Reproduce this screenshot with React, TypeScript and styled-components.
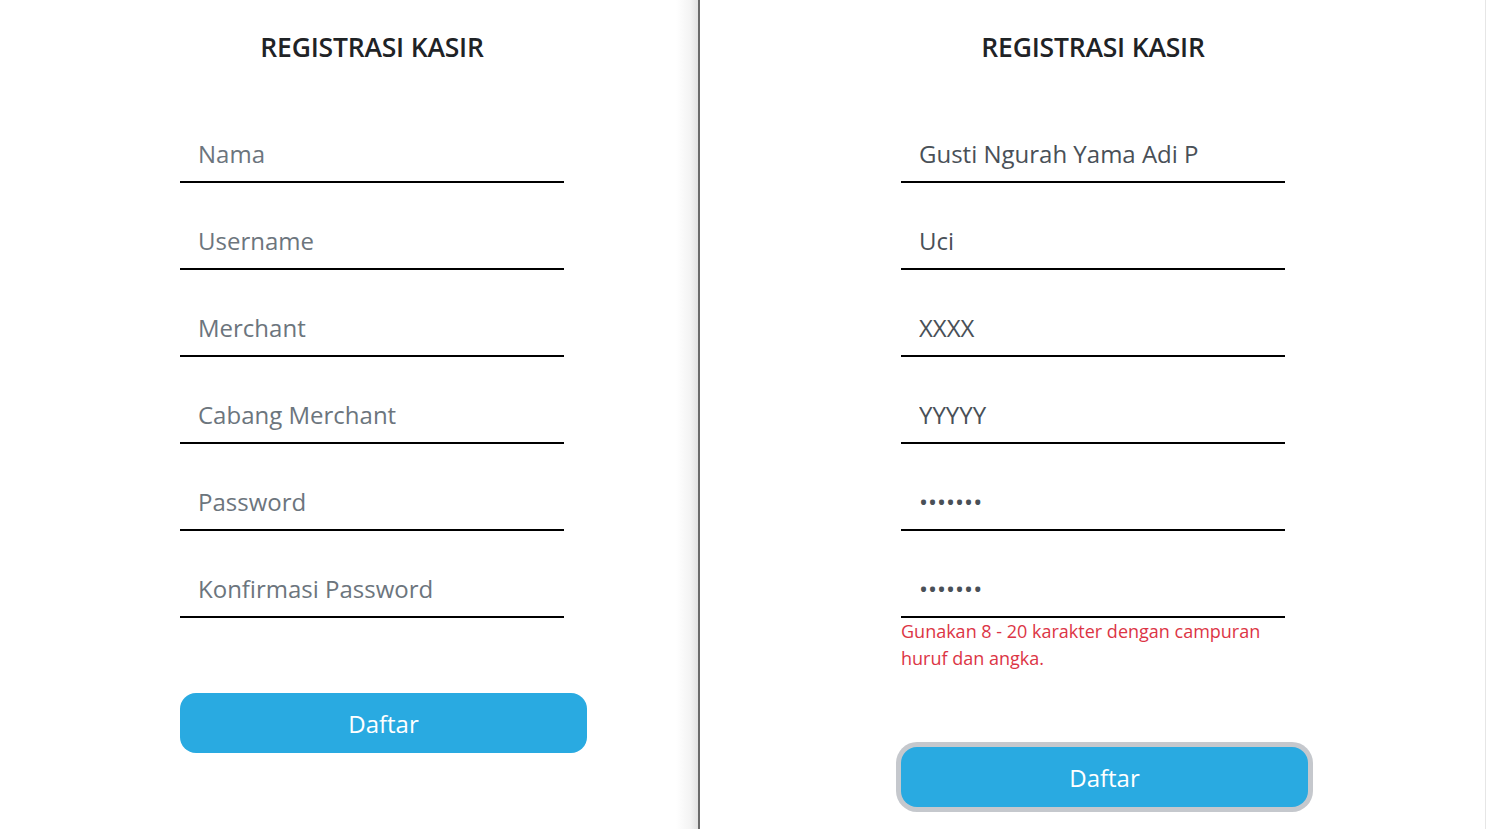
import React from "react";
import styled, { createGlobalStyle } from "styled-components";

const GlobalStyle = createGlobalStyle`
  html, body {
    margin: 0;
    padding: 0;
    background: #ffffff;
    font-family: "Open Sans", "Liberation Sans", sans-serif;
  }
  * {
    box-sizing: border-box;
  }
`;

const Page = styled.div`
  display: flex;
  width: 1486px;
  height: 829px;
  overflow: hidden;
`;

const Panel = styled.div<{ $offset: number; $side: "left" | "right" }>`
  flex: ${(p) => (p.$side === "left" ? "0 0 698px" : "1 1 auto")};
  height: 100%;
  padding-left: ${(p) => p.$offset}px;
  padding-top: 30px;
  background: ${(p) =>
    p.$side === "left"
      ? "linear-gradient(to left, #e2e2e2 0px, #f4f4f4 8px, #ffffff 22px)"
      : "#ffffff"};
  border-left: ${(p) => (p.$side === "right" ? "2px solid #6a6a6a" : "none")};
  border-right: ${(p) => (p.$side === "right" ? "1px solid #e6e6e6" : "none")};
`;

const Form = styled.form`
  display: flex;
  flex-direction: column;
  width: 384px;
`;

const Title = styled.h1`
  margin: 0 0 65px;
  height: 34px;
  line-height: 34px;
  text-align: center;
  font-size: 26.5px;
  font-weight: 600;
  letter-spacing: -0.2px;
  color: #1f2326;
`;

const Fields = styled.div`
  display: flex;
  flex-direction: column;
  gap: 33px;
`;

const Input = styled.input`
  display: block;
  width: 100%;
  height: 54px;
  padding: 0 0 4px 18px;
  border: none;
  border-bottom: 2px solid #000000;
  background: transparent;
  font-family: "Open Sans", "Liberation Sans", sans-serif;
  font-size: 24px;
  color: #495057;
  outline: none;

  &::placeholder {
    color: #6c757d;
    opacity: 1;
  }
`;

const ErrorText = styled.p`
  margin: 0;
  width: 384px;
  font-size: 18px;
  line-height: 27px;
  color: #dc3545;
`;

const Button = styled.button<{ $focused?: boolean }>`
  margin-top: 75px;
  width: 407px;
  height: 60px;
  border: none;
  border-radius: 16px;
  background: #29aae1;
  color: #ffffff;
  font-family: "Open Sans", "Liberation Sans", sans-serif;
  font-size: 24px;
  cursor: pointer;
  box-shadow: ${(p) => (p.$focused ? "0 0 0 5px #c5c8cd" : "none")};
`;

export default function App() {
  return (
    <>
      <GlobalStyle />
      <Page>
        <Panel $side="left" $offset={180}>
          <Form onSubmit={(e) => e.preventDefault()}>
            <Title>REGISTRASI KASIR</Title>
            <Fields>
              <Input placeholder="Nama" />
              <Input placeholder="Username" />
              <Input placeholder="Merchant" />
              <Input placeholder="Cabang Merchant" />
              <Input type="password" placeholder="Password" />
              <Input type="password" placeholder="Konfirmasi Password" />
            </Fields>
            <Button type="submit">Daftar</Button>
          </Form>
        </Panel>
        <Panel $side="right" $offset={201}>
          <Form onSubmit={(e) => e.preventDefault()}>
            <Title>REGISTRASI KASIR</Title>
            <Fields>
              <Input defaultValue="Gusti Ngurah Yama Adi P" />
              <Input defaultValue="Uci" />
              <Input defaultValue="XXXX" />
              <Input defaultValue="YYYYY" />
              <Input type="password" defaultValue="1234567" />
              <div>
                <Input type="password" defaultValue="1234567" />
                <ErrorText>
                  Gunakan 8 - 20 karakter dengan campuran huruf dan angka.
                </ErrorText>
              </div>
            </Fields>
            <Button type="submit" $focused>
              Daftar
            </Button>
          </Form>
        </Panel>
      </Page>
    </>
  );
}
